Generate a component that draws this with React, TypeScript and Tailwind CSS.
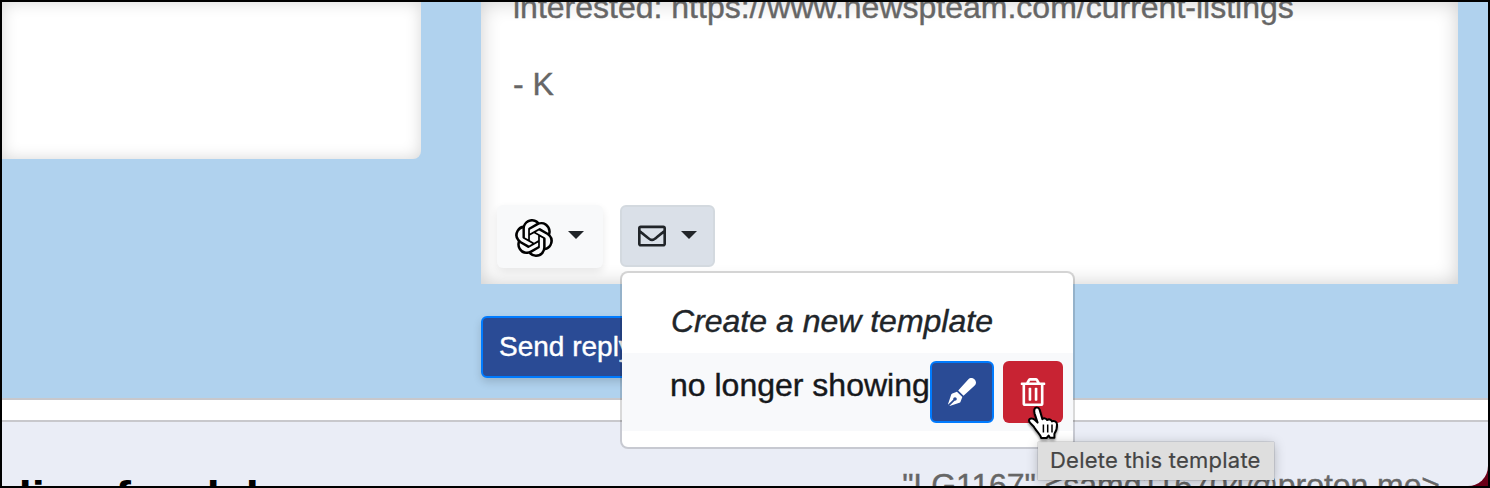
import { FaPenFancy, FaRegEnvelope, FaRegTrashAlt } from "react-icons/fa";
import { SiOpenai } from "react-icons/si";

function Caret() {
  return (
    <span className="h-0 w-0 border-x-[8.5px] border-t-[8.5px] border-x-transparent border-t-[#212529]" />
  );
}

function HandCursor() {
  return (
    <svg
      className="absolute left-[1026px] top-[405px] h-[37px] w-[36px] drop-shadow-[0_2px_1px_rgba(0,0,0,0.4)]"
      viewBox="0 0 36 37"
    >
      <path
        d="M8.4 4.6C9 2 12.6 1.8 13.6 4.6L16.4 14.2C17.6 12.8 20.4 13.2 21.2 15C22.8 13.8 25.2 14.4 26 16.4C27.8 15.4 30.8 16.4 31 19.4C31.2 22.6 30.6 25.6 28.4 28.8V32.8H24L22.6 30.6L20.6 33H15.2C14.6 29.6 10.6 26.6 8.8 23.2C7.4 20.4 3 18 3 15.4C3.4 12.8 7 13 9 15L11.6 17.6L8.6 8.6C8.2 7.2 8 6 8.4 4.6Z"
        fill="white"
        stroke="black"
        strokeWidth="2"
        strokeLinejoin="round"
      />
      <path d="M17.4 19.6V27.4M21.7 19.6V27.4M26 19.6V27.4" stroke="black" strokeWidth="1.5" />
    </svg>
  );
}

function TemplateMenu() {
  return (
    <div className="absolute left-[620px] top-[271px] flex h-[178px] w-[455px] flex-col rounded-lg border-2 border-black/15 bg-white bg-clip-padding pt-4 text-[32px] leading-[48px]">
      <div className="h-16 pl-[49px] pt-2 italic text-[#212529]">
        <span className="whitespace-nowrap">Create a new template</span>
      </div>
      <div className="flex h-[78px] items-start bg-[#f8f9fb] pl-12 pt-2 text-[#16181b]">
        <span className="w-[260px] whitespace-nowrap">no longer showing</span>
        <button className="flex h-[62px] w-16 items-center justify-center rounded-md border-2 border-[#007bff] bg-[#2a4b95] text-white">
          <FaPenFancy size={28} />
        </button>
        <button className="ml-[9px] flex h-[62px] w-[60px] items-center justify-center rounded-md bg-[#c82333] text-white">
          <FaRegTrashAlt size={28} />
        </button>
      </div>
    </div>
  );
}

export default function App() {
  return (
    <div className="relative h-[488px] w-[1490px] overflow-hidden border-2 border-black bg-[#6b0018] font-['Liberation_Sans',Arial,sans-serif] [-webkit-text-stroke:0.4px_currentColor]">
      <div className="flex h-[484px] w-[1486px] flex-col overflow-hidden rounded-br-[20px] bg-[#eaedf6]">
        <div className="flex h-[398px] shrink-0 gap-[60px] border-b-2 border-[#c8c8cc] bg-[#b0d2ee]">
          <div className="h-[157px] w-[419px] rounded-br-lg bg-white shadow-[inset_0_0_16px_rgba(0,0,0,0.16)]" />
          <div className="w-[977px]">
            <div className="flex h-[282px] flex-col overflow-hidden bg-white pl-8 shadow-[inset_0_0_20px_rgba(0,0,0,0.2)]">
              <div className="-mt-[14px] h-[217px] shrink-0 whitespace-nowrap text-[32px] leading-[39px] text-[#666]">
                <p>interested: https://www.newspteam.com/current-listings</p>
                <p className="mt-[38px]">- K</p>
              </div>
              <div className="-ml-4 flex items-start gap-[17px]">
                <button className="flex h-[63px] w-[106px] items-center rounded-md bg-[#f8f9fa] pl-[18px] shadow-[0_4px_8px_rgba(0,0,0,0.09)]">
                  <SiOpenai size={38} className="mt-[3px] text-black" strokeWidth={0} />
                  <span className="-mt-1 ml-[15px] flex"><Caret /></span>
                </button>
                <button className="flex h-[62px] w-[95px] items-center rounded-md border-2 border-[#d3d9df] bg-[#dae0e8] pl-4 text-[#212529]">
                  <FaRegEnvelope size={28} className="-mt-px" />
                  <span className="-mt-0.5 ml-[15px] flex"><Caret /></span>
                </button>
              </div>
            </div>
            <button className="mt-8 flex h-[62px] w-[166px] items-center whitespace-nowrap rounded-md border-2 border-[#007bff] bg-[#2a4b95] pl-4 text-[28px] leading-[42px] text-white shadow-[0_4px_8px_rgba(0,0,0,0.15)]">
              Send reply
            </button>
          </div>
        </div>
        <div className="h-5 shrink-0 bg-white" />
        <div className="flex h-[66px] shrink-0 justify-between overflow-hidden whitespace-nowrap border-t-2 border-[#c8c8cc] pr-[48px]">
          <div className="ml-px pt-[46px] text-[47px] font-bold leading-[60px] text-black [-webkit-text-stroke:0px]">ding for dab</div>
          <div className="pt-[44px] text-[32px] leading-[39px] tracking-[-0.06px] text-[#666]">
            "LG1167" &lt;samg116704@proton.me&gt;
          </div>
        </div>
      </div>
      <div className="absolute inset-[-2px]">
        <TemplateMenu />
        <div className="absolute left-[1038px] top-[442px] flex h-[38px] w-[236px] items-center whitespace-nowrap bg-[#dedede] pb-0.5 pl-3 font-[Inter,sans-serif] text-[22px] tracking-[0.22px] text-[#444] shadow-[0_2px_12px_rgba(0,0,0,0.25),0_0_1px_rgba(0,0,0,0.5)] [-webkit-text-stroke:0.2px_currentColor]">
          Delete this template
        </div>
        <HandCursor />
      </div>
    </div>
  );
}
